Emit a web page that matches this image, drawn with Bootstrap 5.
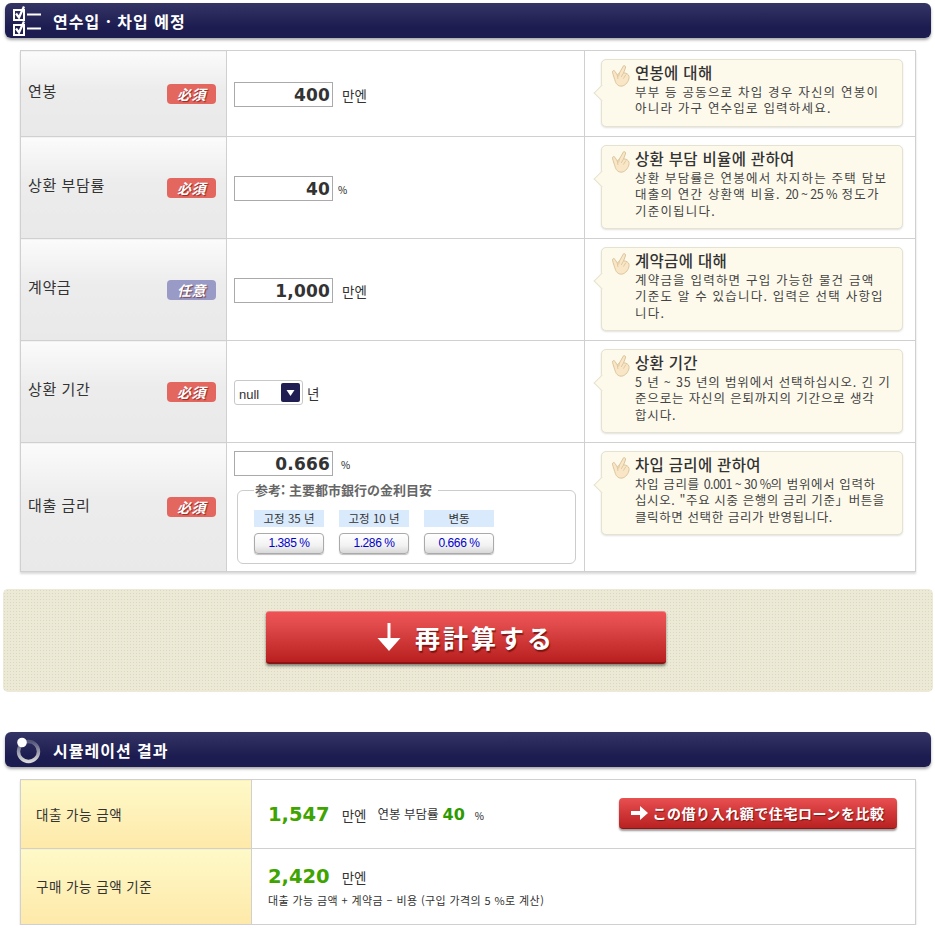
<!DOCTYPE html>
<html lang="ko">
<head>
<meta charset="utf-8">
<title>연수입 · 차입 예정</title>
<link href="https://cdn.jsdelivr.net/npm/bootstrap@5.3.0/dist/css/bootstrap.min.css" rel="stylesheet">
<style>
body{margin:0;background:#fff;color:#333;font-family:"Noto Sans CJK KR","Liberation Sans",sans-serif;font-size:13px;width:935px;padding-top:3px;overflow-x:hidden}
.sec-head{margin:0 4px 0 5px;height:35px;border-radius:6px;background:linear-gradient(#343465,#1d1c50 70%);box-shadow:0 2px 3px rgba(0,0,0,.35);color:#fff;font-weight:700;font-size:16px;letter-spacing:1px;padding-left:7px;gap:11px}
.sec-head svg{flex:none}
.sheet{margin:12px 19px 0 20px;width:896px;border-collapse:collapse;box-shadow:0 2px 2px rgba(0,0,0,.15);background:#fff;table-layout:fixed}
.sheet td,.sheet th{border:1px solid #d0d0d0;vertical-align:middle;padding:0}
.sheet th{background:linear-gradient(#fbfbfb,#ececec 45%,#e9e9e9);font-weight:400;font-size:15px;letter-spacing:.6px;padding:0 10px 0 7px;color:#333}
.sheet tr.r1{height:86px}.sheet tr.r2{height:102px}.sheet tr.r3{height:129px}
.sheet td.tipcell{vertical-align:top;padding:8px 12px 0 16px}
.sheet td.valcell{padding-left:7px}
.sheet td.topcell{vertical-align:top;padding-top:8px}
.lab-text{position:relative;top:-2px}
.req{width:49px;height:20px;border-radius:4px;background:#e3675f;color:#fff;font:italic 700 14px/20px "Noto Sans CJK JP",sans-serif;text-align:center;text-shadow:1px 1px 1px rgba(90,0,0,.6);flex:none}
.req.opt{background:#9a9ac6}
.shift{margin-top:2px}
.num{width:99px;height:25px;border:1px solid #aaa;border-radius:0;padding:0 2px 0 0;text-align:right;font:700 17px "DejaVu Sans",sans-serif;letter-spacing:.2px;color:#333;background:#fff}
.unit{font-size:13.5px;color:#333;margin-left:9px;position:relative;top:1px}
.unit.pct{font-size:10px;margin-left:5px;color:#222}
.yrs{appearance:none;width:69px;height:25px;border:1px solid #c8c8c8;border-radius:3px;padding:4px 0 0 4px;font:13px "Liberation Sans",sans-serif;color:#333;background:#fff url("data:image/svg+xml,%3Csvg xmlns='http://www.w3.org/2000/svg' width='19' height='19'%3E%3Crect width='19' height='19' rx='2' fill='%231f1d52'/%3E%3Cpath d='M5.5 7h8l-4 6z' fill='%23fff'/%3E%3C/svg%3E") no-repeat right 2px center}
.tipbox{position:relative;background:#fdfaec;border:1px solid #e6e2d0;border-radius:5px;box-shadow:0 1px 2px rgba(0,0,0,.12);padding:3px 4px 9px 33px;width:302px}
.tipbox::before{content:"";position:absolute;left:-6px;top:27px;width:12px;height:12px;background:#fdfaec;border-left:1px solid #e6e2d0;border-bottom:1px solid #e6e2d0;transform:rotate(45deg)}
.tipbox svg{position:absolute;left:9px;top:5px}
.tip-title{font-size:15.5px;font-weight:500;line-height:19px;color:#333;letter-spacing:.3px}
.tip-body{font-size:12.5px;line-height:16.3px;color:#444;letter-spacing:1.2px;margin-top:2px}
.tip-body.tight{letter-spacing:.85px}
.tip-body.tighter{letter-spacing:.6px}
.narrow{letter-spacing:-.6px}
.ref-box{margin:14px 8px 0 3px;width:339px;height:74px;border:1px solid #ccc;border-radius:6px;padding:0 0 0 16px;position:relative}
.ref-box legend{float:none;width:auto;margin:0;padding:0 6px 0 1px;position:absolute;top:-9px;left:16px;background:#fff;font:700 13px/16px "Noto Sans CJK JP",sans-serif;color:#666}
.ref-col{width:70px}
.ref-cap{height:17px;background:#d9eafc;font-size:11.5px;line-height:17px;text-align:center;color:#333;margin-bottom:5px}
.ref-btn{width:70px;height:21px;padding:0;border:1px solid #aaa;border-radius:4px;background:linear-gradient(#fff,#f2f2f2 60%,#d8d8d8);box-shadow:0 1px 1px rgba(0,0,0,.25);font:12px/19px "Liberation Sans",sans-serif;color:#00c;letter-spacing:-.4px}
.ref-row{gap:15px;margin-top:19px}
.band{margin:17px 2px 0 3px;height:103px;border-radius:5px;background-color:#ece9d6;background-image:radial-gradient(#dcd8bf 1px,transparent 1px);background-size:3px 3px}
.big-btn{width:400px;height:53px;border:0;border-radius:3px;background:linear-gradient(#ef5255,#e14b4b 25%,#b91f1f);border-top:1px solid #e88;border-bottom:2px solid #8a1515;box-shadow:0 2px 3px rgba(0,0,0,.45);color:#fff;font:700 25px "Noto Sans CJK JP",sans-serif;letter-spacing:3px;text-shadow:1px 2px 1px rgba(80,0,0,.6);gap:14px;padding:0;margin:0 4px 6px 0}
.res-head{margin-top:40px}
.res{margin-top:12px}
.res tr.q1{height:69px}.res tr.q2{height:76px}
.res th{background:linear-gradient(#fef9c8,#fee9a9);font-size:13.5px;padding-left:15px;letter-spacing:.5px}
.res td{padding-left:16px}
.amt{font:700 19.5px "DejaVu Sans",sans-serif;color:#3fa400}
.amt-s{font:700 16px "DejaVu Sans",sans-serif;color:#2f9a00;margin:0 10px 0 4px}
.mini{font-size:12.5px;margin-left:11px}
.note{font-size:11px;color:#333;margin-top:4px;letter-spacing:.4px}
.cmp-btn{width:278px;height:31px;border:0;border-radius:4px;background:linear-gradient(#e85052,#cf3435 55%,#b92222);border-bottom:1px solid #8a1515;box-shadow:0 2px 2px rgba(0,0,0,.4);color:#fff;font:700 14px "Noto Sans CJK JP",sans-serif;letter-spacing:.55px;text-shadow:1px 1px 1px rgba(80,0,0,.6);gap:3px;padding:0;margin:0 18px 2px 0}
</style>
</head>
<body>
<svg width="0" height="0" class="position-absolute">
<defs>
<symbol id="hand" viewBox="0 0 20 22">
<path d="M12.5 .8C14 .3 15 1.4 14.4 3L12.6 7.8C15.4 8 17.6 9.3 18 11.3 18.6 14.4 16 19.3 12.2 20.8 8.4 22.2 5.3 19.6 4.3 16.4 3.7 14.3 2.2 10.4 1.5 7.2 1.2 5.600 3 4.9 4 6.4L6.2 10 8.4 8Z" fill="#f8e6c6" stroke="#d9c096" stroke-width=".9"/>
<path d="M8.4 8 7.6 11.5M12.6 7.8 10.2 12M15 9.4 12.4 13.6M6.2 10 7 14" fill="none" stroke="#d9c096" stroke-width=".8"/>
</symbol>
<linearGradient id="ringfill" x1="0" y1="0" x2="0" y2="1"><stop offset="0" stop-color="#55557a"/><stop offset="1" stop-color="#d8d8d8"/></linearGradient>
</defs>
</svg>

<div class="sec-head d-flex align-items-center">
<svg width="30" height="32" viewBox="0 0 30 32"><g fill="none" stroke="#fff"><rect x="2" y="5" width="10" height="10" stroke-width="2"/><rect x="2" y="20" width="10" height="10" stroke-width="2"/><path d="M4 8.500l3 4 5-11M4 23.500l3 4 5-11" stroke-width="2.3"/><path d="M15 9.500h14M15 23.500h14" stroke-width="2.2"/></g></svg>
<span>연수입 · 차입 예정</span>
</div>

<table class="sheet">
<colgroup><col style="width:206px"><col style="width:358px"><col></colgroup>
<tr class="r1">
<th><div class="d-flex justify-content-between align-items-center"><span class="lab-text">연봉</span><span class="req">必須</span></div></th>
<td class="valcell"><div class="d-flex align-items-center shift"><input class="num" value="400"><span class="unit">만엔</span></div></td>
<td class="tipcell"><div class="tipbox"><svg width="20" height="22"><use href="#hand"/></svg><div class="tip-title">연봉에 대해</div><div class="tip-body">부부 등 공동으로 차입 경우 자신의 연봉이<br>아니라 가구 연수입로 입력하세요.</div></div></td>
</tr>
<tr class="r2">
<th><div class="d-flex justify-content-between align-items-center"><span class="lab-text">상환 부담률</span><span class="req">必須</span></div></th>
<td class="valcell"><div class="d-flex align-items-center shift"><input class="num" value="40"><span class="unit pct">%</span></div></td>
<td class="tipcell"><div class="tipbox"><svg width="20" height="22"><use href="#hand"/></svg><div class="tip-title">상환 부담 비율에 관하여</div><div class="tip-body">상환 부담률은 연봉에서 차지하는 주택 담보<br>대출의 연간 상환액 비율. <span class="narrow">20 ~ 25 %</span> 정도가<br>기준이됩니다.</div></div></td>
</tr>
<tr class="r2">
<th><div class="d-flex justify-content-between align-items-center"><span class="lab-text">계약금</span><span class="req opt">任意</span></div></th>
<td class="valcell"><div class="d-flex align-items-center shift"><input class="num" value="1,000"><span class="unit">만엔</span></div></td>
<td class="tipcell"><div class="tipbox"><svg width="20" height="22"><use href="#hand"/></svg><div class="tip-title">계약금에 대해</div><div class="tip-body">계약금을 입력하면 구입 가능한 물건 금액<br>기준도 알 수 있습니다. 입력은 선택 사항입<br>니다.</div></div></td>
</tr>
<tr class="r2">
<th><div class="d-flex justify-content-between align-items-center"><span class="lab-text">상환 기간</span><span class="req">必須</span></div></th>
<td class="valcell"><div class="d-flex align-items-center shift"><select class="yrs"><option>null</option></select><span class="unit" style="margin-left:4px">년</span></div></td>
<td class="tipcell"><div class="tipbox"><svg width="20" height="22"><use href="#hand"/></svg><div class="tip-title">상환 기간</div><div class="tip-body tight">5 년 ~ 35 년의 범위에서 선택하십시오. 긴 기<br>준으로는 자신의 은퇴까지의 기간으로 생각<br>합시다.</div></div></td>
</tr>
<tr class="r3">
<th><div class="d-flex justify-content-between align-items-center"><span class="lab-text">대출 금리</span><span class="req">必須</span></div></th>
<td class="valcell topcell">
<div class="d-flex align-items-center"><input class="num" value="0.666"><span class="unit pct" style="margin-left:8px">%</span></div>
<fieldset class="ref-box">
<legend>参考: 主要都市銀行の金利目安</legend>
<div class="d-flex ref-row">
<div class="ref-col"><div class="ref-cap">고정 35 년</div><button class="ref-btn" type="button">1.385 %</button></div>
<div class="ref-col"><div class="ref-cap">고정 10 년</div><button class="ref-btn" type="button">1.286 %</button></div>
<div class="ref-col"><div class="ref-cap">변동</div><button class="ref-btn" type="button">0.666 %</button></div>
</div>
</fieldset>
</td>
<td class="tipcell"><div class="tipbox"><svg width="20" height="22"><use href="#hand"/></svg><div class="tip-title">차입 금리에 관하여</div><div class="tip-body tighter">차입 금리를 <span class="narrow">0.001 ~ 30 %</span>의 범위에서 입력하<br>십시오. "주요 시중 은행의 금리 기준」버튼을<br>클릭하면 선택한 금리가 반영됩니다.</div></div></td>
</tr>
</table>

<div class="band d-flex align-items-center justify-content-center">
<button class="big-btn d-flex align-items-center justify-content-center" type="button">
<svg width="24" height="28" viewBox="0 0 24 28"><path d="M10.500 0h3v15h10L12 28 .5 15h10z" fill="#fff"/></svg>
<span>再計算する</span>
</button>
</div>

<div class="sec-head res-head d-flex align-items-center">
<svg width="30" height="30" viewBox="0 0 30 30"><circle cx="16.500" cy="16.500" r="10" fill="none" stroke="url(#ringfill)" stroke-width="3.400"/><circle cx="10" cy="7.500" r="4.800" fill="#fff"/></svg>
<span>시뮬레이션 결과</span>
</div>

<table class="sheet res">
<colgroup><col style="width:231px"><col></colgroup>
<tr class="q1">
<th>대출 가능 금액</th>
<td><div class="d-flex align-items-center"><span class="amt">1,547</span><span class="unit" style="margin-left:12px">만엔</span><span class="mini">연봉 부담률</span><span class="amt-s">40</span><span class="unit pct" style="margin-left:0">%</span>
<button class="cmp-btn d-flex align-items-center justify-content-center ms-auto" type="button"><svg width="18" height="14" viewBox="0 0 18 14"><path d="M0 5h9V0l8 7-8 7V9H0z" fill="#fff"/></svg><span>この借り入れ額で住宅ローンを比較</span></button></div></td>
</tr>
<tr class="q2">
<th>구매 가능 금액 기준</th>
<td><div class="d-flex align-items-center"><span class="amt">2,420</span><span class="unit" style="margin-left:12px">만엔</span></div><div class="note">대출 가능 금액 + 계약금 – 비용 (구입 가격의 5 %로 계산)</div></td>
</tr>
</table>
<script src="https://cdn.jsdelivr.net/npm/bootstrap@5.3.0/dist/js/bootstrap.bundle.min.js"></script>
</body>
</html>
